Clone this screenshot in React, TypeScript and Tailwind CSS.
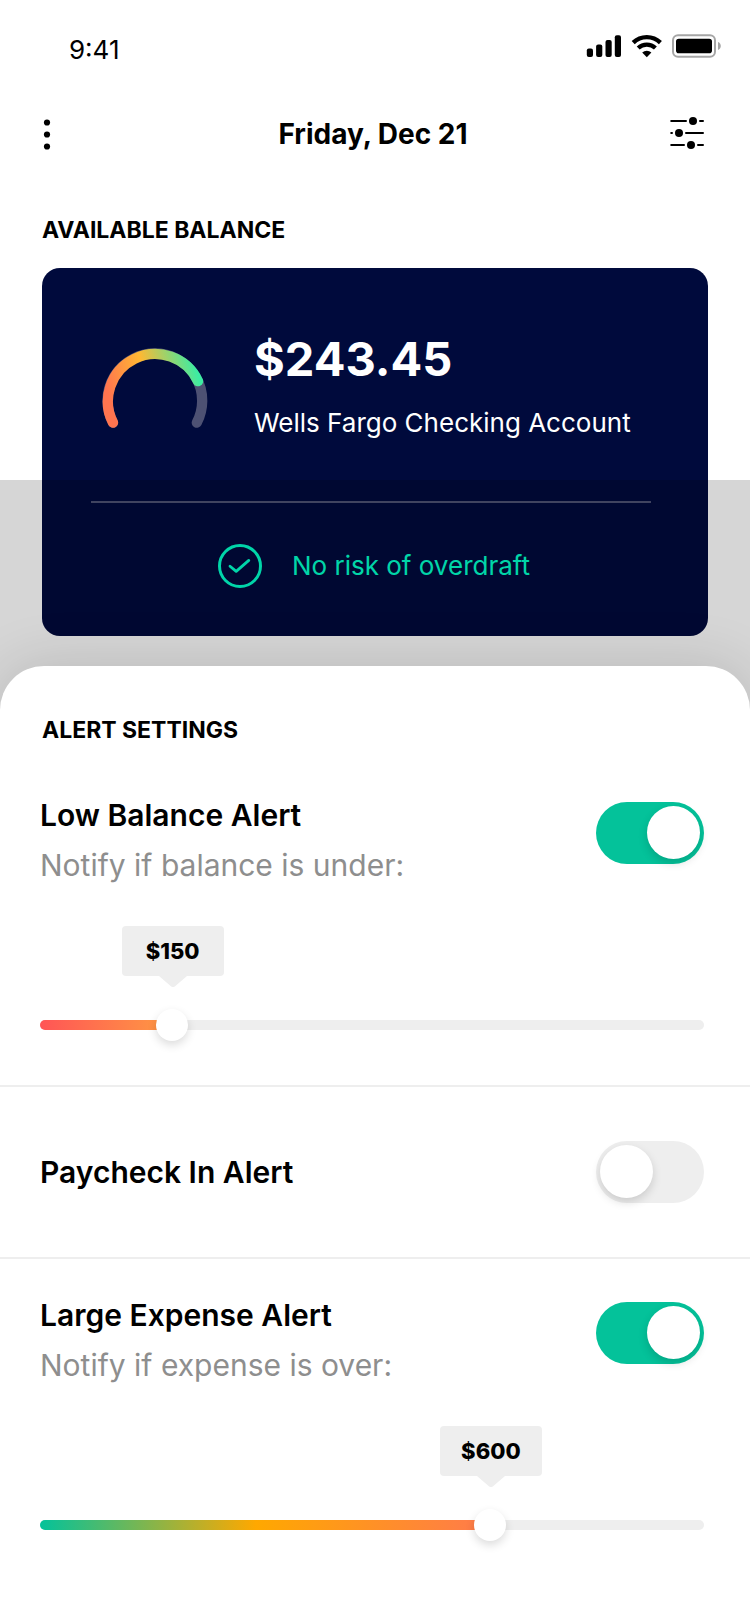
import { useId, useState } from "react";

function SignalIcon() {
  return (
    <svg width="36" height="24" viewBox="0 0 36 24" aria-hidden="true">
      <rect x="0.8" y="14.6" width="6.2" height="8.4" rx="2" />
      <rect x="10.1" y="10.4" width="6.2" height="12.6" rx="2" />
      <rect x="19.5" y="6" width="6.2" height="17" rx="2" />
      <rect x="28.8" y="1.2" width="6.2" height="21.8" rx="2" />
    </svg>
  );
}

function WifiIcon() {
  return (
    <svg width="32" height="24" viewBox="0 0 32 24" aria-hidden="true" fill="none" stroke="black">
      <path d="M2.2 8.6a19.6 19.6 0 0 1 27.2 0" strokeWidth="4.4" />
      <path d="M7.2 14.1a12.5 12.5 0 0 1 17.2 0" strokeWidth="4.2" />
      <path d="M15.8 23.2l-4.6-4.6a6.7 6.7 0 0 1 9.2 0z" fill="black" stroke="none" />
    </svg>
  );
}

function BatteryIcon() {
  return (
    <svg width="50" height="24" viewBox="0 0 50 24" aria-hidden="true">
      <rect x="1" y="1.2" width="42" height="21.6" rx="5" fill="none" stroke="#a6a6a6" strokeWidth="2" />
      <rect x="4" y="4.8" width="36" height="14.4" rx="2.8" />
      <path d="M46 8c1.7 .6 2.8 2.2 2.8 4s-1.1 3.4-2.8 4z" fill="#a6a6a6" />
    </svg>
  );
}

function DotsIcon() {
  return (
    <svg width="10" height="32" viewBox="0 0 10 32" aria-hidden="true">
      <circle cx="5" cy="4.5" r="3.1" />
      <circle cx="5" cy="16.5" r="3.1" />
      <circle cx="5" cy="28.5" r="3.1" />
    </svg>
  );
}

function FiltersIcon() {
  return (
    <svg width="34" height="34" viewBox="0 0 34 34" aria-hidden="true">
      <g stroke="black" strokeWidth="2" strokeLinecap="round">
        <path d="M1.2 4H16M30 4h3M1.2 16h.8M16 16H33M1.2 28H14M28 28h5" />
      </g>
      <circle cx="23" cy="4" r="4" />
      <circle cx="9" cy="16" r="4" />
      <circle cx="21" cy="28" r="4" />
    </svg>
  );
}

function Gauge() {
  return (
    <svg width="106" height="90" viewBox="0 0 106 90" aria-hidden="true" className="shrink-0" fill="none" strokeWidth="10.3" strokeLinecap="round">
      <defs>
        <linearGradient id="gauge" gradientUnits="userSpaceOnUse" x1="0" y1="70" x2="98" y2="42">
          <stop offset="0.1" stopColor="#ff744f" />
          <stop offset="0.5" stopColor="#ffb833" />
          <stop offset="1" stopColor="#3deca2" />
        </linearGradient>
      </defs>
      <path d="M11 82.7A47.3 47.3 0 1 1 94.8 82.7" stroke="#4d5173" />
      <path d="M11 82.7A47.3 47.3 0 1 1 96 41.2" stroke="url(#gauge)" />
    </svg>
  );
}

function CheckCircle() {
  return (
    <svg width="44" height="44" viewBox="0 0 44 44" aria-hidden="true" className="shrink-0" fill="none" stroke="currentColor" strokeLinecap="round" strokeLinejoin="round">
      <circle cx="22" cy="22" r="20.5" strokeWidth="3" />
      <path d="M12 22.2l6.2 5.2L30.8 16.4" strokeWidth="2.8" />
    </svg>
  );
}

function Toggle({ id, defaultChecked }: { id: string; defaultChecked: boolean }) {
  return (
    <input
      id={id}
      type="checkbox"
      role="switch"
      defaultChecked={defaultChecked}
      className="relative h-[62px] w-[108px] shrink-0 cursor-pointer appearance-none rounded-full bg-[#eeeeee] before:absolute before:top-1 before:left-1 before:size-[53px] before:rounded-full before:bg-white before:shadow-[0_4px_10px_rgba(0,0,0,0.15)] before:content-[''] checked:bg-[#04c29a] checked:before:left-[51px]"
    />
  );
}

type SliderProps = { label: string; initial: number; max: number; fill: string };

function AmountSlider({ label, initial, max, fill }: SliderProps) {
  const [value, setValue] = useState(initial);
  const id = useId();
  const position = `calc(16px + (100% - 32px) * ${value / max})`;
  return (
    <div className="relative mt-[43px] pt-[83px]">
      <output
        htmlFor={id}
        className="absolute top-0 ml-px flex h-[50px] w-[102px] -translate-x-1/2 items-center justify-center rounded bg-[#eeeeee] text-[22px] leading-7 font-extrabold"
        style={{ left: position }}
      >
        ${value}
        <svg width="28" height="12" viewBox="0 0 28 12" aria-hidden="true" className="absolute top-full left-[37px]" fill="#eeeeee">
          <path d="M0 0H28L15.8 10.4Q14 11.8 12.2 10.4Z" />
        </svg>
      </output>
      <div className="relative flex h-8 items-center">
        <div className="h-[10px] w-full overflow-hidden rounded-full bg-[#eeeeee]">
          <div className={`h-full ${fill}`} style={{ width: position }} />
        </div>
        <input
          id={id}
          type="range"
          aria-label={label}
          min={0}
          max={max}
          value={value}
          onChange={(e) => setValue(Number(e.target.value))}
          className="absolute inset-0 m-0 h-8 w-full cursor-pointer appearance-none bg-transparent [&::-webkit-slider-thumb]:size-8 [&::-webkit-slider-thumb]:appearance-none [&::-webkit-slider-thumb]:rounded-full [&::-webkit-slider-thumb]:bg-white [&::-webkit-slider-thumb]:shadow-[0_4px_10px_rgba(0,0,0,0.14)]"
        />
      </div>
    </div>
  );
}

type LimitAlertProps = { id: string; title: string; hint: string; initial: number; max: number; fill: string };

function LimitAlert({ id, title, hint, initial, max, fill }: LimitAlertProps) {
  return (
    <section className="pr-[46px] pl-10">
      <div className="flex items-start justify-between">
        <div className="flex flex-col gap-[14px] text-[30px] leading-9">
          <label htmlFor={id} className="font-semibold">
            {title}
          </label>
          <p className="text-[#8e8e8e]">{hint}</p>
        </div>
        <div className="flex pt-[5px]">
          <Toggle id={id} defaultChecked />
        </div>
      </div>
      <AmountSlider label={hint} initial={initial} max={max} fill={fill} />
    </section>
  );
}

export default function App() {
  return (
    <div className="flex min-h-screen flex-col bg-white font-['Inter',sans-serif] text-black">
      <div className="flex h-[98px] items-center justify-between pt-[2px] pr-7 pl-[69px]">
        <span className="text-[26px] leading-8">9:41</span>
        <div className="flex items-center gap-[9px] pb-2">
          <SignalIcon />
          <WifiIcon />
          <BatteryIcon />
        </div>
      </div>

      <header className="grid h-[72px] grid-cols-[1fr_auto_1fr] items-center pr-[46px] pl-[42px]">
        <button type="button" aria-label="Menu" className="cursor-pointer justify-self-start">
          <DotsIcon />
        </button>
        <h1 className="text-[28px] leading-9 font-bold">Friday, Dec 21</h1>
        <button type="button" aria-label="Filters" className="cursor-pointer justify-self-end">
          <FiltersIcon />
        </button>
      </header>

      <section className="px-[42px] pt-[46px] pb-[30px]">
        <h2 className="text-[23px] leading-7 font-bold">AVAILABLE BALANCE</h2>
        <div className="mt-6 rounded-[18px] bg-[#000a3c] text-white">
          <div className="flex h-[233px] items-center gap-[46px] pl-[60px]">
            <Gauge />
            <div className="flex flex-col gap-5">
              <p className="text-[47px] leading-14 font-bold">$243.45</p>
              <p className="text-[26px] leading-8">Wells Fargo Checking Account</p>
            </div>
          </div>
          <hr className="mr-[57px] ml-[49px] border-t-2 border-[#4d5173]" />
          <div className="flex h-[133px] items-center justify-center gap-[30px] pr-[2px] pb-[7px] text-[26px] leading-8 text-[#00feca]">
            <CheckCircle />
            <p>No risk of overdraft</p>
          </div>
        </div>
      </section>

      <div className="relative flex grow flex-col">
        <div className="pointer-events-none absolute inset-x-0 -top-[186px] h-[240px] bg-black/16" />
        <main className="relative grow rounded-t-[44px] bg-white pt-[50px] pb-20 shadow-[0_0_60px_rgba(0,0,0,0.14)]">
          <h2 className="mb-[53px] px-[42px] text-[23px] leading-7 font-bold">ALERT SETTINGS</h2>
          <LimitAlert
            id="low-balance"
            title="Low Balance Alert"
            hint="Notify if balance is under:"
            initial={150}
            max={820}
            fill="bg-linear-to-r/srgb from-[#ff5556] to-[#ff9a42]"
          />
          <section className="mt-11 mb-[38px] flex items-center justify-between border-y-2 border-[#eeeeee] pt-[54px] pr-[46px] pb-[54px] pl-10">
            <label htmlFor="paycheck" className="text-[30px] leading-9 font-semibold">
              Paycheck In Alert
            </label>
            <Toggle id="paycheck" defaultChecked={false} />
          </section>
          <LimitAlert
            id="large-expense"
            title="Large Expense Alert"
            hint="Notify if expense is over:"
            initial={600}
            max={874}
            fill="bg-linear-to-r/srgb from-[#04c29a] via-[#ffa800] via-48% to-[#ff7a4c]"
          />
        </main>
      </div>
    </div>
  );
}
